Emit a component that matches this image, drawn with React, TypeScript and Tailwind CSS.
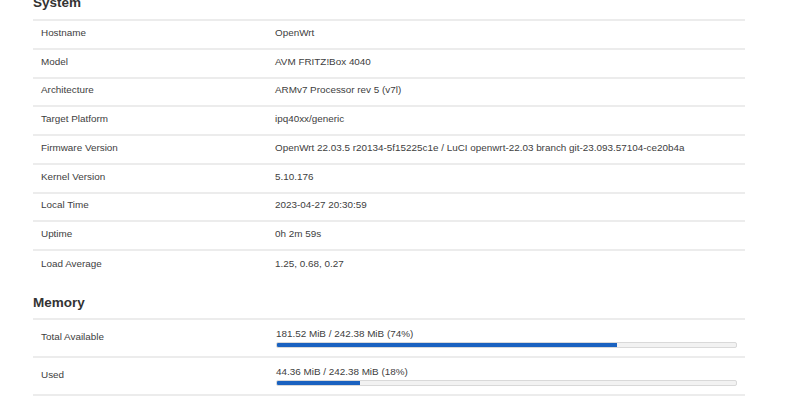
const system: [string, string][] = [
  ["Hostname", "OpenWrt"],
  ["Model", "AVM FRITZ!Box 4040"],
  ["Architecture", "ARMv7 Processor rev 5 (v7l)"],
  ["Target Platform", "ipq40xx/generic"],
  ["Firmware Version", "OpenWrt 22.03.5 r20134-5f15225c1e / LuCI openwrt-22.03 branch git-23.093.57104-ce20b4a"],
  ["Kernel Version", "5.10.176"],
  ["Local Time", "2023-04-27 20:30:59"],
  ["Uptime", "0h 2m 59s"],
  ["Load Average", "1.25, 0.68, 0.27"],
];

const memory: { label: string; text: string; pct: number }[] = [
  { label: "Total Available", text: "181.52 MiB / 242.38 MiB (74%)", pct: 74 },
  { label: "Used", text: "44.36 MiB / 242.38 MiB (18%)", pct: 18 },
];

function Bar({ text, pct }: { text: string; pct: number }) {
  return (
    <div className="flex flex-col gap-[2px]">
      <span className="leading-[12px]">{text}</span>
      <div className="h-[6px] rounded-[2px] border border-[#d9d9d9] bg-[#f2f2f2] overflow-hidden">
        <div className="h-full bg-[#1a62c0]" style={{ width: `${pct}%` }} />
      </div>
    </div>
  );
}

export default function App() {
  return (
    <div className="min-h-[400px] bg-white px-[33px] text-[9.9px] text-[#404040] [font-family:'Liberation_Sans',Arial,sans-serif]">
      <div className="w-[712px] overflow-hidden">
        <h2 className="mt-[-5px] mb-[8px] text-[13.5px] font-bold leading-[16px] text-[#333]">System</h2>
        <div className="border-t-2 border-[#ececec]">
          {system.map(([k, v], i) => (
            <div
              key={k}
              className={`flex h-[28.75px] items-center pb-[2px] ${i < system.length - 1 ? "border-b-2 border-[#ececec]" : ""}`}
            >
              <div className="w-[234px] shrink-0 pl-[8px]">{k}</div>
              <div className="pl-[8px]">{v}</div>
            </div>
          ))}
        </div>

        <h2 className="mt-[15px] mb-[7px] text-[13.5px] font-bold leading-[16px] text-[#333]">Memory</h2>
        <div className="border-t-2 border-[#ececec]">
          {memory.map((m) => (
            <div key={m.label} className="flex h-[38px] items-center border-b-2 border-[#ececec]">
              <div className="w-[234px] shrink-0 pl-[8px]">{m.label}</div>
              <div className="flex-1 pl-[9px] pr-[8px]">
                <Bar text={m.text} pct={m.pct} />
              </div>
            </div>
          ))}
        </div>
      </div>
    </div>
  );
}
